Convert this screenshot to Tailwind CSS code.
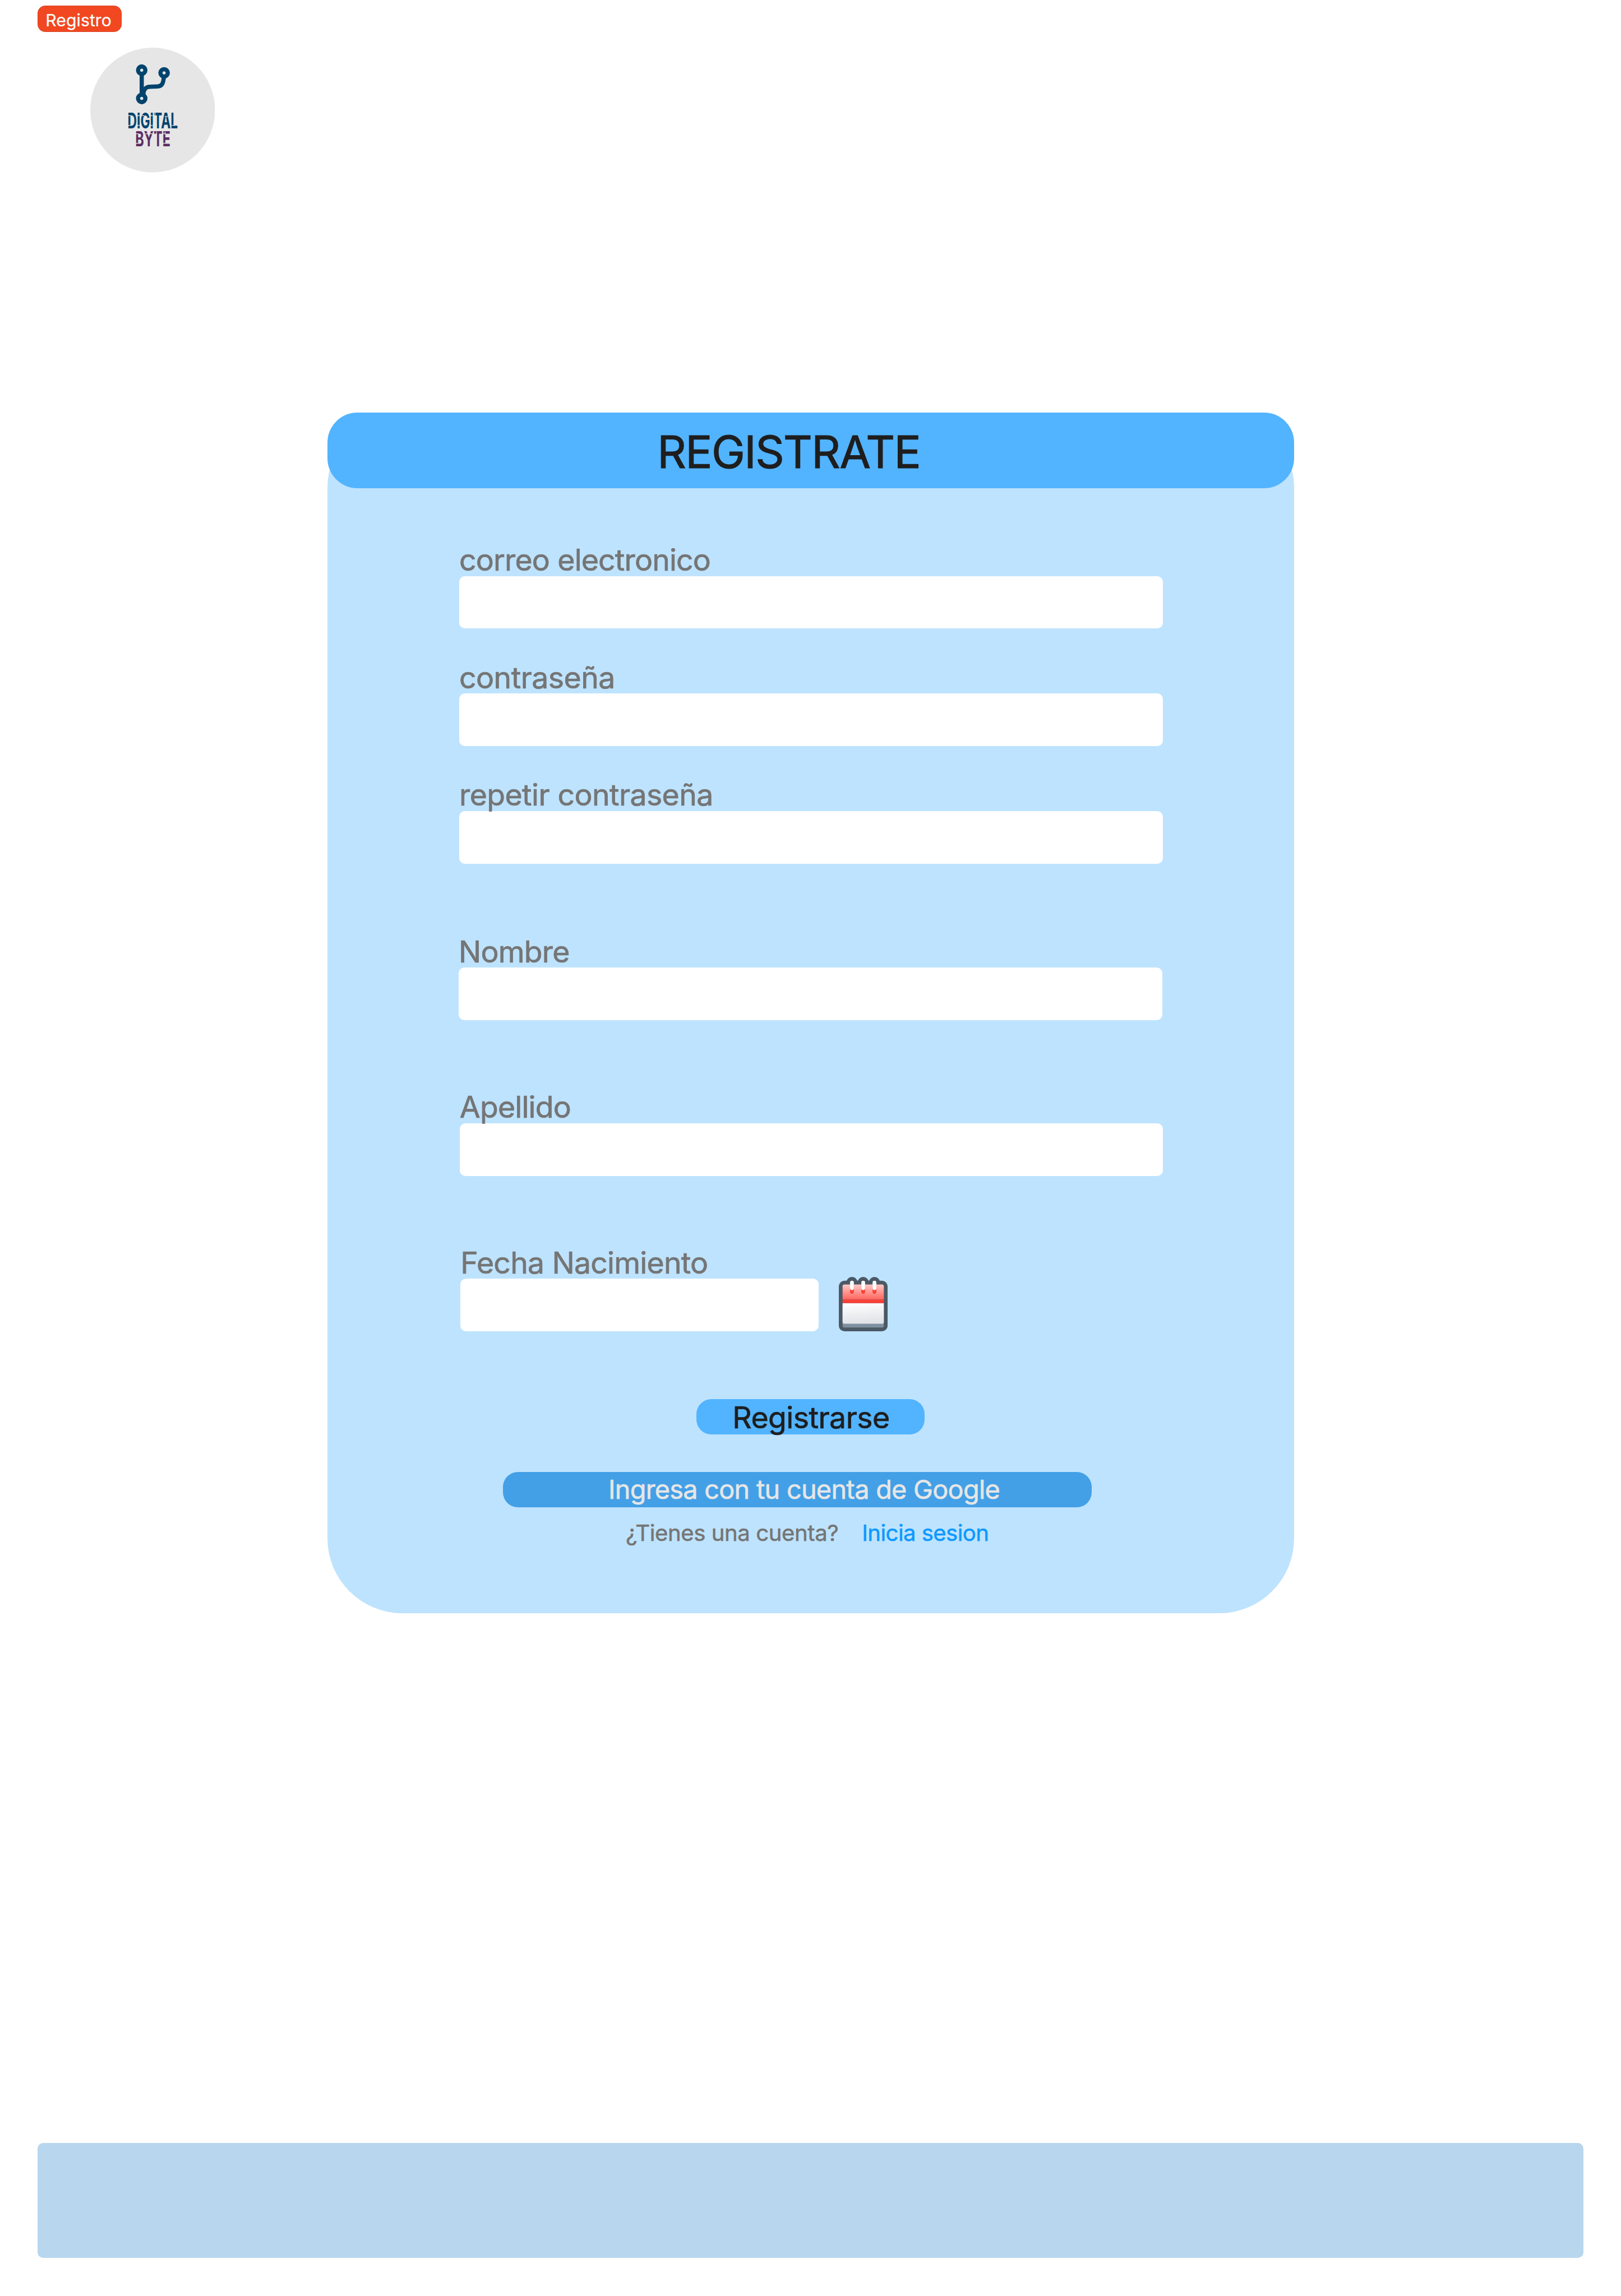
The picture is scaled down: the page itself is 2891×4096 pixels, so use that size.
<!DOCTYPE html>
<html lang="es">
<head>
<meta charset="utf-8">
<title>Registro</title>
<script src="https://cdn.jsdelivr.net/npm/@tailwindcss/browser@4"></script>
</head>
<body class="bg-white">
<div class="flex h-[4096px] w-[2891px] flex-col items-start overflow-hidden px-[66.9px] pt-[10px] font-['Inter',sans-serif]">

  <div class="flex h-[47px] w-[149.7px] items-center rounded-[13.4px] border-[1.7px] border-[#d8401f] bg-[#f24822] pt-[4.8px] pl-[13.3px] text-[30.1px] leading-none tracking-[0.004em] text-white [-webkit-text-stroke:0.008em]">Registro</div>

  <!-- Logo -->
  <svg class="mt-[28.3px] ml-[93.7px] size-[222.5px] shrink-0" viewBox="192 102 266 266">
    <circle cx="325" cy="235" r="133" fill="#e6e6e6"/>
    <g fill="none" stroke="#00446d" stroke-width="9">
      <path d="M301.7 158V204"/>
      <path d="M305 204C305.5 190 310.5 185.7 319 185.5L335 184.8C345 184.4 347.8 178 348.7 165"/>
      <circle cx="301.7" cy="150" r="7.8"/>
      <circle cx="349.4" cy="155.7" r="7.8"/>
      <circle cx="301.7" cy="210.3" r="7.8"/>
    </g>
    <g font-family="Inter, sans-serif" font-weight="700">
      <text x="271.5" y="274" font-size="45.4" textLength="107.2" lengthAdjust="spacingAndGlyphs" fill="#00446d">DIGITAL</text>
      <text x="288" y="312" font-size="44" textLength="74.8" lengthAdjust="spacingAndGlyphs" fill="#5b2d62">BYTE</text>
    </g>
    <!-- Stencil cuts -->
    <path d="M272 247h8M290 247h8M299 247h8M317 247h8M351 249h6M272 267.8h8M290 267.8h8M317 267.8h8M366 267.8h7M288 285.8h7M310 285.8h16M346 285.8h7M288 306h7M346 306h7M330 240v7M333.2 281v5M351.5 281v5" fill="none" stroke="#e6e6e6" stroke-width="1.5"/>
  </svg>

  <!-- Registration card -->
  <form class="mt-[428.4px] ml-[517px] flex h-[2141.5px] w-[1724.5px] shrink-0 flex-col items-start rounded-[133.8px] bg-[#bde3ff] text-[53.54px] leading-none text-[#757575]">
    <h1 class="flex h-[135.2px] w-full shrink-0 items-center rounded-[53.5px] bg-[#52b3ff] pt-[5px] pl-[588.3px] text-[80.3px] tracking-[-0.020em] text-[#1e1e1e] [-webkit-text-stroke:0.014em]">REGISTRATE</h1>

    <div class="mt-[100.3px] ml-[235.1px] flex flex-col gap-[2.3px]">
      <label class="relative tracking-[-0.016em] [-webkit-text-stroke:0.014em]">correo electronico</label>
      <div class="h-[93.7px] w-[1254.6px] rounded-[10px] bg-white"></div>
    </div>
    <div class="mt-[60.3px] ml-[235.1px] flex flex-col gap-[2.3px]">
      <label class="relative tracking-[-0.010em] [-webkit-text-stroke:0.014em]">contraseña</label>
      <div class="h-[93.7px] w-[1254.6px] rounded-[10px] bg-white"></div>
    </div>
    <div class="mt-[60.3px] ml-[235.1px] flex flex-col gap-[2.3px]">
      <label class="relative tracking-[-0.011em] [-webkit-text-stroke:0.014em]">repetir contraseña</label>
      <div class="h-[93.7px] w-[1254.6px] rounded-[10px] bg-white"></div>
    </div>
    <div class="mt-[129.7px] ml-[234.2px] flex flex-col gap-[2.3px]">
      <label class="relative tracking-[-0.016em] [-webkit-text-stroke:0.014em]">Nombre</label>
      <div class="h-[93.7px] w-[1254.6px] rounded-[10px] bg-white"></div>
    </div>
    <div class="mt-[128px] ml-[235.9px] flex flex-col gap-[2.3px]">
      <label class="relative tracking-[-0.015em] [-webkit-text-stroke:0.014em]">Apellido</label>
      <div class="h-[93.7px] w-[1254.6px] rounded-[10px] bg-white"></div>
    </div>
    <div class="mt-[128px] ml-[237.4px] flex items-end gap-[35.4px]">
      <div class="flex flex-col gap-[2.3px]">
        <label class="relative tracking-[-0.015em] [-webkit-text-stroke:0.014em]">Fecha Nacimiento</label>
        <div class="h-[93.7px] w-[639px] rounded-[10px] bg-white"></div>
      </div>
      <svg class="h-[97px] w-[87px]" viewBox="0 0 104 116">
        <defs>
          <linearGradient id="red" x1="0" y1="0" x2="0" y2="1"><stop offset="0" stop-color="#ffc8c6"/><stop offset="1" stop-color="#ff675e"/></linearGradient>
          <linearGradient id="page" x1="0" y1="0" x2="0.15" y2="1"><stop offset="0" stop-color="#ffffff"/><stop offset="1" stop-color="#e0e3e7"/></linearGradient>
        </defs>
        <rect y="8" width="104" height="108" rx="12" fill="#4b5866"/>
        <g fill="#4b5866"><circle cx="28" cy="12" r="12"/><circle cx="52" cy="12" r="12"/><circle cx="76" cy="12" r="12"/></g>
        <rect x="8" y="60" width="88" height="48" rx="4" fill="#7f90a0"/>
        <path d="M8 56H96V96a4 4 0 0 1-4 4H12a4 4 0 0 1-4-4Z" fill="url(#page)"/>
        <path d="M8 48V20a4 4 0 0 1 4-4H92a4 4 0 0 1 4 4V48Z" fill="url(#red)"/>
        <path d="M8 48H96V56H8Z" fill="#f9423a"/>
        <path d="M28 20V32M52 20V32M76 20V32" stroke="#f9423a" stroke-width="8" stroke-linecap="round"/>
        <path d="M28 12V24M52 12V24M76 12V24" stroke="#fff" stroke-width="8" stroke-linecap="round"/>
      </svg>
    </div>

    <button type="button" class="mt-[121px] ml-[657.7px] flex h-[62.9px] w-[407.2px] shrink-0 items-center rounded-[26.8px] bg-[#52b3ff] pt-[3px] pl-[64.7px] tracking-[-0.010em] text-[#1e1e1e] [-webkit-text-stroke:0.014em]">Registrarse</button>
    <button type="button" class="mt-[67.3px] ml-[313px] flex h-[62.7px] w-[1050.6px] shrink-0 items-center rounded-[26.8px] bg-[#43a0e6] pl-[188px] text-[46.85px] tracking-[-0.016em] whitespace-nowrap text-[#e6e6e6] [-webkit-text-stroke:0.014em]">Ingresa con tu cuenta de Google</button>
    <div class="mt-[25.8px] ml-[532px] flex text-[40.15px]">
      <span class="w-[421.3px] tracking-[-0.011em] whitespace-nowrap [-webkit-text-stroke:0.014em]">¿Tienes una cuenta?</span>
      <a class="tracking-[-0.015em] text-[#0d99ff] [-webkit-text-stroke:0.014em]">Inicia sesion</a>
    </div>
  </form>

  <footer class="mt-[945.3px] h-[205.5px] w-[2757.2px] shrink-0 rounded-[10px] bg-[#b8d6ee]"></footer>
</div>
</body>
</html>
